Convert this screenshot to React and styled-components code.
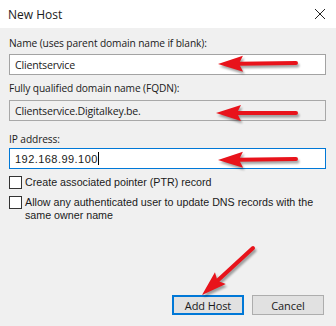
import React from "react";
import styled, { createGlobalStyle } from "styled-components";

const Global = createGlobalStyle`
  html, body { margin: 0; padding: 0; background: #f0f0f0; }
  * { box-sizing: border-box; }
`;

const Window = styled.div`
  position: relative;
  width: 336px;
  height: 326px;
  background: #f0f0f0;
  display: flex;
  flex-direction: column;
  font-family: "Open Sans", "Noto Sans", sans-serif;
  font-size: 10.2px;
  color: #1a1a1a;
  overflow: hidden;
`;

const TitleBar = styled.div`
  height: 28px;
  background: #ffffff;
  display: flex;
  align-items: center;
  justify-content: space-between;
  padding: 0 8px 0 8px;
  font-size: 12px;
  color: #1a1a1a;
`;

const Close = styled.svg`
  width: 12px;
  height: 12px;
  margin-right: 2px;
`;

const Body = styled.div`
  flex: 1;
  display: flex;
  flex-direction: column;
  padding: 7px 10px 11px 9px;
`;

const Label = styled.div`
  line-height: 15px;
  margin-top: ${(p) => p.$mt}px;
  margin-bottom: ${(p) => p.$mb}px;
  letter-spacing: -0.1px;
  white-space: nowrap;
`;

const Input = styled.div`
  height: 21px;
  display: flex;
  align-items: center;
  padding-left: 5px;
  border: 1px solid ${(p) => (p.$focus ? "#0078d7" : p.$readonly ? "#a8a8a8" : "#a3a3a3")};
  background: ${(p) => (p.$readonly ? "#f0f0f0" : "#ffffff")};
  font-family: ${(p) => (p.$mono ? '"Liberation Sans", Tahoma, sans-serif' : "inherit")};
  font-size: ${(p) => (p.$mono ? "11px" : "10.6px")};
  letter-spacing: ${(p) => (p.$mono ? "0.45px" : "-0.2px")};
  color: #1a1a1a;
`;

const Caret = styled.span`
  display: inline-block;
  width: 1px;
  height: 13px;
  background: #000;
  margin-left: 0px;
`;

const CheckRow = styled.div`
  display: flex;
  align-items: flex-start;
  gap: 3px;
  margin-top: ${(p) => p.$mt}px;
  font-family: "Liberation Sans", Tahoma, sans-serif;
  font-size: 10.7px;
  line-height: 13px;
`;

const Box = styled.div`
  flex: none;
  width: 13px;
  height: 13px;
  border: 1px solid #333;
  background: #fff;
`;

const CheckText = styled.div`
  padding-top: 0px;
`;

const ButtonRow = styled.div`
  margin-top: auto;
  display: flex;
  justify-content: flex-end;
  gap: 8px;
  padding-right: 2px;
`;

const Button = styled.div`
  width: 72px;
  height: 20px;
  display: flex;
  align-items: center;
  justify-content: center;
  background: #e1e1e1;
  border: 1px solid ${(p) => (p.$default ? "#0078d7" : "#adadad")};
  box-shadow: ${(p) => (p.$default ? "inset 0 0 0 1px #0078d7" : "none")};
  font-size: 11px;
  letter-spacing: -0.1px;
  color: #1a1a1a;
`;

const Overlay = styled.svg`
  position: absolute;
  left: 0;
  top: 0;
  width: 336px;
  height: 326px;
  pointer-events: none;
`;

function Arrow({ x1, y1, x2, y2 }) {
  const dx = x2 - x1;
  const dy = y2 - y1;
  const len = Math.sqrt(dx * dx + dy * dy);
  const ux = dx / len;
  const uy = dy / len;
  const px = -uy;
  const py = ux;
  const headLen = 25;
  const headW = 8;
  const bx = x2 - ux * headLen;
  const by = y2 - uy * headLen;
  const notch = 4;
  const nx = x2 - ux * (headLen - notch);
  const ny = y2 - uy * (headLen - notch);
  const head = `${x2},${y2} ${bx + px * headW},${by + py * headW} ${nx},${ny} ${bx - px * headW},${by - py * headW}`;
  return (
    <g>
      <g transform="translate(1.5,2.5)" opacity="0.35" filter="url(#blur)">
        <line x1={x1} y1={y1} x2={nx} y2={ny} stroke="#000" strokeWidth="4" strokeLinecap="round" />
        <polygon points={head} fill="#000" />
      </g>
      <line x1={x1} y1={y1} x2={nx} y2={ny} stroke="#e8131b" strokeWidth="4" strokeLinecap="round" />
      <polygon points={head} fill="#e8131b" />
    </g>
  );
}

export default function App() {
  return (
    <>
      <Global />
      <Window>
        <TitleBar>
          <span>New Host</span>
          <Close viewBox="0 0 12 12">
            <path d="M1 1 L11 11 M11 1 L1 11" stroke="#222" strokeWidth="1" fill="none" />
          </Close>
        </TitleBar>
        <Body>
          <Label $mt={1} $mb={3}>Name (uses parent domain name if blank):</Label>
          <Input>Clientservice</Input>
          <Label $mt={6} $mb={4}>Fully qualified domain name (FQDN):</Label>
          <Input $readonly>Clientservice.Digitalkey.be.</Input>
          <Label $mt={11} $mb={1}>IP address:</Label>
          <Input $focus $mono>
            192.168.99.100
            <Caret />
          </Input>
          <CheckRow $mt={7}>
            <Box />
            <CheckText>Create associated pointer (PTR) record</CheckText>
          </CheckRow>
          <CheckRow $mt={7}>
            <Box />
            <CheckText>Allow any authenticated user to update DNS records with the same owner name</CheckText>
          </CheckRow>
          <ButtonRow>
            <Button $default>Add Host</Button>
            <Button>Cancel</Button>
          </ButtonRow>
        </Body>
        <Overlay viewBox="0 0 336 326">
          <defs>
            <filter id="blur" x="-20%" y="-50%" width="140%" height="200%">
              <feGaussianBlur stdDeviation="1.2" />
            </filter>
          </defs>
          <Arrow x1={296} y1={63} x2={218} y2={64} />
          <Arrow x1={296} y1={113} x2={216} y2={113} />
          <Arrow x1={296} y1={159} x2={218} y2={160} />
          <Arrow x1={253} y1={248} x2={202} y2={295} />
        </Overlay>
      </Window>
    </>
  );
}
